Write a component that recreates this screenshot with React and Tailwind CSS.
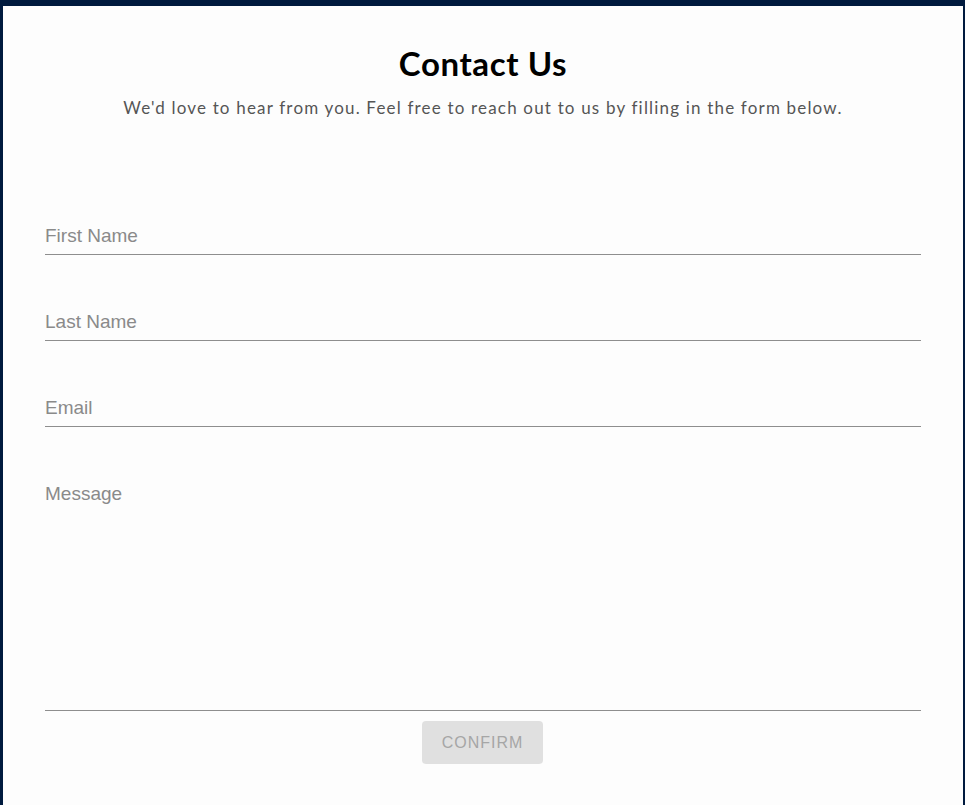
export default function App() {
	const fields = ["First Name", "Last Name", "Email"];

	return (
		<div className="min-h-screen bg-[#001a3e] px-[3px] pt-[6px] pr-[2px]">
			<div className="h-[799px] overflow-hidden bg-[#fdfdfd] px-[42px] font-['Liberation_Sans',Arial,sans-serif]">
				{/* heading */}
				<div className="pt-[37px] text-center">
					<h1 className="font-['Lato',sans-serif] text-[33px] leading-[40px] font-bold tracking-[0.6px] text-black">
						Contact Us
					</h1>
					<p className="mt-[13px] font-['Lato',sans-serif] text-[17px] leading-[24px] tracking-[1.18px] text-[#555]">
						We'd love to hear from you. Feel free to reach out to us by filling in the form below.
					</p>
				</div>

				<form className="mt-[49px]" onSubmit={(e) => e.preventDefault()}>
					{fields.map((f) => (
						<div key={f} className="border-b border-[#8e8e8e] pt-[55px] pb-[6px]">
							<input
								placeholder={f}
								className="block h-[24px] w-full bg-transparent text-[19px] leading-[24px] text-[#333] outline-none placeholder:text-[#8a8a8a]"
							/>
						</div>
					))}
					<div className="border-b border-[#8e8e8e] pt-[55px]">
						<textarea
							placeholder="Message"
							className="block h-[228px] w-full resize-none bg-transparent text-[19px] leading-[24px] text-[#333] outline-none placeholder:text-[#8a8a8a]"
						/>
					</div>
					<div className="mt-[10px] flex justify-center">
						<button
							type="submit"
							disabled
							className="-ml-[1px] h-[43px] w-[121px] rounded-[4px] bg-[#e0e0e0] text-[16px] tracking-[1px] text-[#a6a6a6] uppercase"
						>
							Confirm
						</button>
					</div>
				</form>
			</div>
		</div>
	);
}
